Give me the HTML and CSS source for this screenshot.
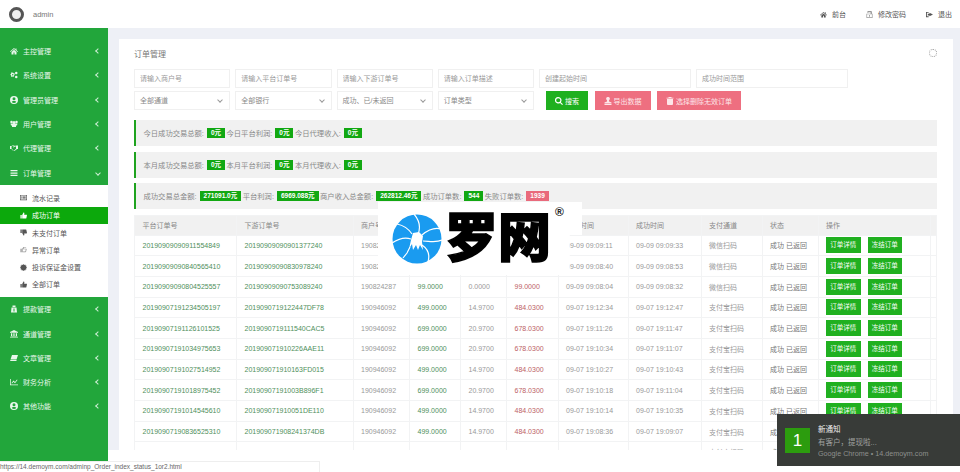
FILE: index.html
```html
<!DOCTYPE html>
<html lang="en">
<head>
<meta charset="UTF-8">
<meta name="viewport" content="width=device-width, initial-scale=1.0">
<title>订单管理</title>
<link rel="stylesheet" href="styles.css">
</head>
<body>
    <svg class="sprite" width="0" height="0">
        <symbol id="i-home" viewBox="0 0 16 16"><path d="M8 2 0 9l1 1 7-6 7 6 1-1-3-2.600V3h-2v2zM3 10v5h4v-4h2v4h4v-5L8 5.500z"/></symbol>
        <symbol id="i-cogs" viewBox="0 0 16 16"><path d="M6 3 7 4.500 9 4.500 9.500 7 8 8 8.500 10 7 11.500 5 11 3.500 12 2 10.500 2.500 9 1 8V6l1.500-.5L2 4 3.500 2.500 5 3.500zM5.500 6A1.500 1.500 0 1 0 5.500 9 1.500 1.500 0 0 0 5.500 6z"/><circle cx="12.500" cy="4" r="2.500"/><circle cx="12.500" cy="12" r="2.500"/></symbol>
        <symbol id="i-user" viewBox="0 0 16 16"><path d="M8 0a8 8 0 1 0 0 16A8 8 0 0 0 8 0zm0 2.500a3 3 0 1 1 0 6 3 3 0 0 1 0-6zM8 14a6 6 0 0 1-4.500-2c.5-1.500 2-2 4.500-2s4 .5 4.500 2A6 6 0 0 1 8 14z"/></symbol>
        <symbol id="i-users" viewBox="0 0 16 16"><circle cx="3" cy="4" r="2.500"/><circle cx="13" cy="4" r="2.500"/><circle cx="8" cy="5" r="3"/><path d="M1 7h14l-1 4h-2v3H4v-3H2z"/></symbol>
        <symbol id="i-shake" viewBox="0 0 16 16"><path d="M0 4h3l2-1h3l2 1 2-1h4v7h-2l-5 4-2-1-2-.5L3 10H0zm5 0L3 5v4l3 3 2 1 4-3.500V5L10 5 7 7 6 6l2-2z"/></symbol>
        <symbol id="i-bars" viewBox="0 0 16 16"><path d="M1 2h14v2.500H1zM1 6.800h14v2.500H1zM1 11.500h14V14H1z"/></symbol>
        <symbol id="i-list" viewBox="0 0 16 16"><path d="M0 2h16v12H0zm1.500 1.500v9h13v-9zM3 5h2v1.500H3zm3 0h7v1.500H6zM3 7.500h2V9H3zm3 0h7V9H6zM3 10h2v1.500H3zm3 0h7v1.500H6z"/></symbol>
        <symbol id="i-up" viewBox="0 0 16 16"><path d="M1 7h3v8H1zM5 7l3-6c1.500 0 2 1 2 2L9.500 6H15c1 0 1 1 .8 2l-1.300 6c-.2.700-.5 1-1.500 1H5z"/></symbol>
        <symbol id="i-down" viewBox="0 0 16 16"><path d="M1 1h3v8H1zM5 9l3 6c1.500 0 2-1 2-2l-.5-3H15c1 0 1-1 .8-2L14.500 2c-.2-.7-.5-1-1.500-1H5z"/></symbol>
        <symbol id="i-hand" viewBox="0 0 16 16"><path d="M1 6h3v8H1zM5 6l3-4h6v1.500H9.500L8 6h6.500c1 0 1 3 0 3v2c0 1-1 3-2 3H5zM6.500 7.500V12.500h5.500l1-3.500V7.500z" fill-rule="evenodd"/></symbol>
        <symbol id="i-cert" viewBox="0 0 16 16"><path d="m8 0 1.500 2L12 1l.5 2.500L15 4l-1 2.500L16 8l-2 1.500 1 2.500-2.500.5L12 15l-2.500-1L8 16l-1.500-2L4 15l-.5-2.500L1 12l1-2.500L0 8l2-1.500L1 4l2.500-.5L4 1l2.500 1z"/></symbol>
        <symbol id="i-money" viewBox="0 0 16 16"><path d="M5 1h6v3H5zM3 5h10l1 10H2zm4 2v6h2V7z" fill-rule="evenodd"/></symbol>
        <symbol id="i-bank" viewBox="0 0 16 16"><path d="M8 0 16 4v1.500H0V4zM2 6.500h2.500V12H2zm4.700 0h2.500V12H6.700zm4.800 0H14V12h-2.500zM1 13h14v1.200H1zM0 14.800h16V16H0z"/></symbol>
        <symbol id="i-book" viewBox="0 0 16 16"><path d="M4 2h12l-3 9H1zM1 12h12v2H0z"/></symbol>
        <symbol id="i-chart" viewBox="0 0 16 16"><path d="M0 2h1.500v11H16v1.500H0zM3 10l4-5 3 3 4-5 1 1-5 6.500L7 7.500 4 11z"/></symbol>
        <symbol id="i-lock" viewBox="0 0 16 16"><path d="M5 0h6c1.500 0 2.500 1 2.500 2.500V6H15v10H1V6h9.500V3H5.500v1H3V2.500C3 1 4 0 5 0zM2.500 7.500v7h11v-7zM7 9h2v4H7z" fill-rule="evenodd"/></symbol>
        <symbol id="i-exit" viewBox="0 0 16 16"><path d="M0 2h6v2H2v8h4v2H0zM8 4l8 4-8 4V10H4V6h4z"/></symbol>
        <symbol id="i-search" viewBox="0 0 16 16"><path d="M6.500 0a6.500 6.500 0 0 1 5.200 10.400l4.300 4.200-1.800 1.400-4.100-4.200A6.500 6.500 0 1 1 6.500 0zm0 2.300a4.200 4.200 0 1 0 0 8.400 4.200 4.200 0 0 0 0-8.400z"/></symbol>
        <symbol id="i-export" viewBox="0 0 16 16"><path d="M8 0a3.500 3.500 0 0 1 2 6.500V9l5 2v2H1v-2l5-2V6.500A3.500 3.500 0 0 1 8 0zM1 14h14v2H1z"/></symbol>
        <symbol id="i-trash" viewBox="0 0 16 16"><path d="M5 0h6v1.500h4V3H1V1.500h4zM2 4h12v10c0 1-1 2-2 2H4c-1 0-2-1-2-2z"/></symbol>
    </svg>

    <header class="topbar">
        <div class="admin">
            <span class="avatar"></span>
            <span>admin</span>
        </div>
        <nav class="toplinks">
            <a class="toplink"><svg class="icon"><use href="#i-home"/></svg>前台</a>
            <a class="toplink"><svg class="icon icon-light"><use href="#i-lock"/></svg>修改密码</a>
            <a class="toplink"><svg class="icon"><use href="#i-exit"/></svg>退出</a>
        </nav>
    </header>

    <div class="main">
        <aside class="sidebar">
            <ul class="menu menu-first">
                <li><svg class="icon"><use href="#i-home"/></svg><span>主控管理</span><i class="arrow"></i></li>
                <li><svg class="icon"><use href="#i-cogs"/></svg><span>系统设置</span><i class="arrow"></i></li>
                <li><svg class="icon"><use href="#i-user"/></svg><span>管理员管理</span><i class="arrow"></i></li>
                <li><svg class="icon"><use href="#i-users"/></svg><span>用户管理</span><i class="arrow"></i></li>
                <li><svg class="icon"><use href="#i-shake"/></svg><span>代理管理</span><i class="arrow"></i></li>
                <li><svg class="icon"><use href="#i-bars"/></svg><span>订单管理</span><i class="arrow arrow-down"></i></li>
            </ul>
            <ul class="submenu">
                <li><svg class="icon"><use href="#i-list"/></svg>流水记录</li>
                <li class="active"><svg class="icon"><use href="#i-up"/></svg>成功订单</li>
                <li><svg class="icon"><use href="#i-down"/></svg>未支付订单</li>
                <li><svg class="icon icon-light"><use href="#i-hand"/></svg>异常订单</li>
                <li><svg class="icon"><use href="#i-cert"/></svg>投诉保证金设置</li>
                <li><svg class="icon"><use href="#i-up"/></svg>全部订单</li>
            </ul>
            <ul class="menu">
                <li><svg class="icon"><use href="#i-money"/></svg><span>提款管理</span><i class="arrow"></i></li>
                <li><svg class="icon"><use href="#i-bank"/></svg><span>通道管理</span><i class="arrow"></i></li>
                <li><svg class="icon"><use href="#i-book"/></svg><span>文章管理</span><i class="arrow"></i></li>
                <li><svg class="icon"><use href="#i-chart"/></svg><span>财务分析</span><i class="arrow"></i></li>
                <li><svg class="icon"><use href="#i-user"/></svg><span>其他功能</span><i class="arrow"></i></li>
            </ul>
        </aside>

        <section class="content">
            <div class="card">
                <div class="card-title">
                    <h1>订单管理</h1>
                    <span class="refresh"></span>
                </div>

                <form class="filters">
                    <div class="filter-row">
                        <input class="w96" type="text" placeholder="请输入商户号">
                        <input class="w96" type="text" placeholder="请输入平台订单号">
                        <input class="w96" type="text" placeholder="请输入下游订单号">
                        <input class="w96" type="text" placeholder="请输入订单描述">
                        <input class="w152" type="text" placeholder="创建起始时间">
                        <input class="w152" type="text" placeholder="成功时间范围">
                    </div>
                    <div class="filter-row">
                        <div class="select w96">全部通道</div>
                        <div class="select w96">全部银行</div>
                        <div class="select w96">成功、已/未返回</div>
                        <div class="select w96">订单类型</div>
                        <div class="buttons">
                            <button class="btn btn-green" type="button"><svg class="icon"><use href="#i-search"/></svg>搜索</button>
                            <button class="btn btn-pink" type="button"><svg class="icon"><use href="#i-export"/></svg>导出数据</button>
                            <button class="btn btn-pink" type="button"><svg class="icon"><use href="#i-trash"/></svg>选择删除无效订单</button>
                        </div>
                    </div>
                </form>

                <div class="stat">今日成功交易总额:<b>0元</b>今日平台利润:<b>0元</b>今日代理收入:<b>0元</b></div>
                <div class="stat">本月成功交易总额:<b>0元</b>本月平台利润:<b>0元</b>本月代理收入:<b>0元</b></div>
                <div class="stat">成功交易总金额:<b>271091.0元</b>平台利润:<b>6969.088元</b>商户收入总金额:<b>262812.46元</b>成功订单数:<b>544</b>失败订单数:<b class="bad">1939</b></div>

                <table class="orders">
                    <colgroup>
                        <col class="c1"><col class="c2"><col class="c3"><col class="c4"><col class="c5"><col class="c6">
                        <col class="c7"><col class="c8"><col class="c9"><col class="c10"><col class="c11"><col class="c12">
                    </colgroup>
                    <thead>
                        <tr><th>平台订单号</th><th>下游订单号</th><th>商户号</th><th>交易金额</th><th>手续费</th><th>实际金额</th><th>创建时间</th><th>成功时间</th><th>支付通道</th><th>状态</th><th>操作</th><th></th></tr>
                    </thead>
                    <tbody>
                        <tr><td class="ok">20190909090911554849</td><td class="ok">20190909090901377240</td><td>190824287</td><td class="ok">99.0000</td><td>0.0000</td><td class="no">99.0000</td><td>09-09 09:09:11</td><td>09-09 09:09:33</td><td>微信扫码</td><td class="state">成功 已返回</td><td class="ops"><a>订单详情</a><a>冻结订单</a></td><td></td></tr>
                        <tr><td class="ok">20190909090840565410</td><td class="ok">20190909090830978240</td><td>190824287</td><td class="ok">99.0000</td><td>0.0000</td><td class="no">99.0000</td><td>09-09 09:08:40</td><td>09-09 09:08:53</td><td>微信扫码</td><td class="state">成功 已返回</td><td class="ops"><a>订单详情</a><a>冻结订单</a></td><td></td></tr>
                        <tr><td class="ok">20190909090804525557</td><td class="ok">20190909090753089240</td><td>190824287</td><td class="ok">99.0000</td><td>0.0000</td><td class="no">99.0000</td><td>09-09 09:08:04</td><td>09-09 09:08:32</td><td>微信扫码</td><td class="state">成功 已返回</td><td class="ops"><a>订单详情</a><a>冻结订单</a></td><td></td></tr>
                        <tr><td class="ok">20190907191234505197</td><td class="ok">2019090719122447DF78</td><td>190946092</td><td class="ok">499.0000</td><td>14.9700</td><td class="no">484.0300</td><td>09-07 19:12:34</td><td>09-07 19:12:47</td><td>支付宝扫码</td><td class="state">成功 已返回</td><td class="ops"><a>订单详情</a><a>冻结订单</a></td><td></td></tr>
                        <tr><td class="ok">20190907191126101525</td><td class="ok">2019090719111540CAC5</td><td>190946092</td><td class="ok">699.0000</td><td>20.9700</td><td class="no">678.0300</td><td>09-07 19:11:26</td><td>09-07 19:11:47</td><td>支付宝扫码</td><td class="state">成功 已返回</td><td class="ops"><a>订单详情</a><a>冻结订单</a></td><td></td></tr>
                        <tr><td class="ok">20190907191034975653</td><td class="ok">201909071910226AAE11</td><td>190946092</td><td class="ok">699.0000</td><td>20.9700</td><td class="no">678.0300</td><td>09-07 19:10:34</td><td>09-07 19:11:07</td><td>支付宝扫码</td><td class="state">成功 已返回</td><td class="ops"><a>订单详情</a><a>冻结订单</a></td><td></td></tr>
                        <tr><td class="ok">20190907191027514952</td><td class="ok">201909071910163FD015</td><td>190946092</td><td class="ok">499.0000</td><td>14.9700</td><td class="no">484.0300</td><td>09-07 19:10:27</td><td>09-07 19:10:43</td><td>支付宝扫码</td><td class="state">成功 已返回</td><td class="ops"><a>订单详情</a><a>冻结订单</a></td><td></td></tr>
                        <tr><td class="ok">20190907191018975452</td><td class="ok">20190907191003B896F1</td><td>190946092</td><td class="ok">699.0000</td><td>20.9700</td><td class="no">678.0300</td><td>09-07 19:10:18</td><td>09-07 19:11:04</td><td>支付宝扫码</td><td class="state">成功 已返回</td><td class="ops"><a>订单详情</a><a>冻结订单</a></td><td></td></tr>
                        <tr><td class="ok">20190907191014545610</td><td class="ok">201909071910051DE110</td><td>190946092</td><td class="ok">499.0000</td><td>14.9700</td><td class="no">484.0300</td><td>09-07 19:10:14</td><td>09-07 19:10:35</td><td>支付宝扫码</td><td class="state">成功 已返回</td><td class="ops"><a>订单详情</a><a>冻结订单</a></td><td></td></tr>
                        <tr><td class="ok">20190907190836525310</td><td class="ok">201909071908241374DB</td><td>190946092</td><td class="ok">499.0000</td><td>14.9700</td><td class="no">484.0300</td><td>09-07 19:08:36</td><td>09-07 19:09:07</td><td>支付宝扫码</td><td class="state">成功 已返回</td><td class="ops"><a>订单详情</a><a>冻结订单</a></td><td></td></tr>
                        <tr><td class="ok"></td><td class="ok"></td><td></td><td></td><td></td><td></td><td></td><td></td><td>支付宝扫码</td><td class="state">成功 已返回</td><td class="ops"></td><td></td></tr>
                    </tbody>
                </table>
            </div>
        </section>
    </div>

    <!-- watermark sitting over the table -->
    <div class="watermark">
        <svg class="wm-logo" viewBox="0 0 50 50">
            <circle cx="25" cy="25" r="24.500" fill="#1a9bf0"/>
            <g fill="none" stroke="#fff" stroke-width="1.200">
                <path d="M26 20C29 13 27 6 22 0"/>
                <path d="M30 21C36 16 42 13 49 15"/>
                <path d="M31 27C37 27 44 29 50 26"/>
                <path d="M30 31C36 35 38 41 36 48"/>
                <path d="M20 20C16 14 10 11 5 10"/>
                <path d="M19 25C13 23 6 25 0 29"/>
                <path d="M18 33 15 39 11 44"/>
            </g>
            <path d="M21 19 27 18 31 22 30 28 31 36 28 31 26 36 24 31 21 36 20 30 17 35 19 26z" fill="#fff"/>
        </svg>
        <span class="wm-text">罗网</span>
        <span class="wm-reg">®</span>
    </div>

    <!-- browser chrome in the photo: link preview and desktop notification -->
    <div class="statusbar">https://14.demoym.com/adminp_Order_index_status_1or2.html</div>
    <div class="notice">
        <div class="notice-badge">1</div>
        <div class="notice-text">
            <strong>新通知</strong>
            <span>有客户，提现啦...</span>
            <small>Google Chrome • 14.demoym.com</small>
        </div>
    </div>
</body>
</html>
```

FILE: styles.css
```css
* {
    box-sizing: border-box;
}

html, body {
    height: 100%;
}

body {
    margin: 0;
    height: 472px;
    overflow: hidden;
    background-color: #fff;
    font-family: "Liberation Sans", "Noto Sans CJK SC", sans-serif;
    font-size: 7px;
    color: #676a6c;
}

ul {
    margin: 0;
    padding: 0;
    list-style: none;
}

.sprite {
    display: none;
}

.icon {
    width: 8px;
    height: 8px;
    flex: none;
    fill: currentColor;
}

.icon-light {
    opacity: 0.6;
}

/* top bar */
.topbar {
    display: flex;
    justify-content: space-between;
    align-items: center;
    height: 28px;
    padding: 0 8px 0 9px;
}

.admin {
    display: flex;
    align-items: center;
    gap: 9px;
    font-size: 7.500px;
    color: #777;
}

.avatar {
    width: 15px;
    height: 15px;
    border: 3.500px solid #555;
    border-radius: 50%;
    background-color: #eee;
}

.toplinks {
    display: flex;
    gap: 20px;
}

.toplink {
    display: flex;
    align-items: center;
    gap: 5px;
    color: #555;
}

.toplink .icon {
    width: 7px;
    height: 7px;
}

/* sidebar */
.main {
    display: flex;
    align-items: flex-start;
}

.sidebar {
    width: 108px;
    height: 433px;
    flex: none;
    background-color: #22a63b;
}

.menu-first {
    padding-top: 11px;
}

.menu li {
    display: flex;
    align-items: center;
    gap: 5px;
    height: 24.300px;
    padding: 0 8px 0 10px;
    color: #e9f7ec;
}

.menu span {
    flex: 1;
}

.arrow {
    width: 4px;
    height: 4px;
    border-left: 1px solid #cdeed4;
    border-bottom: 1px solid #cdeed4;
    transform: rotate(45deg);
}

.arrow-down {
    transform: rotate(-45deg);
}

.submenu {
    padding: 4.500px 0 4px;
    background-color: #fff;
}

.submenu li {
    display: flex;
    align-items: center;
    gap: 5px;
    height: 17.300px;
    padding-left: 20px;
    color: #555;
}

.submenu li.active {
    background-color: #0ca90c;
    color: #fff;
}

.submenu .icon {
    width: 7px;
    height: 7px;
}

/* content */
.content {
    flex: 1;
    height: 422px;
    padding: 11px 8px 0 11px;
    background-color: #eef0f6;
}

.card {
    height: 411px;
    padding: 0 16px 0 15px;
    overflow: hidden;
    background-color: #fff;
}

.card-title {
    display: flex;
    justify-content: space-between;
    align-items: center;
    height: 30px;
    padding-bottom: 2px;
}

.card-title h1 {
    margin: 0;
    font-size: 8px;
    font-weight: normal;
    color: #777;
}

.refresh {
    width: 8px;
    height: 8px;
    border: 1px dotted #999;
    border-radius: 50%;
}

/* filter form */
.filter-row {
    display: flex;
    gap: 5px;
    height: 19px;
    margin-bottom: 3px;
}

.filter-row input,
.select {
    height: 19px;
    padding: 0 5px;
    border: 1px solid #f0f0f0;
    background-color: #fff;
    font-family: inherit;
    font-size: 7px;
    color: #888;
    line-height: 17px;
}

.filter-row input::placeholder {
    color: #999;
}

.w96 {
    width: 96.250px;
}

.w152 {
    width: 152px;
}

.select {
    position: relative;
}

.select::after {
    content: "";
    position: absolute;
    top: 6px;
    right: 7px;
    width: 3px;
    height: 3px;
    border-right: 1px solid #999;
    border-bottom: 1px solid #999;
    transform: rotate(45deg);
}

.buttons {
    display: flex;
    gap: 6.500px;
    margin-left: 7px;
}

.btn {
    display: flex;
    align-items: center;
    justify-content: center;
    gap: 2px;
    height: 19px;
    padding: 0;
    border: none;
    font-family: inherit;
    font-size: 7px;
    color: #fff;
}

.btn-green {
    width: 42px;
    background-color: #1fb01f;
}

.btn-pink {
    background-color: #ee6f80;
    color: #fde6e9;
}

.btn-pink:nth-child(2) {
    width: 56px;
}

.btn-pink:nth-child(3) {
    width: 84px;
}

/* stat strips */
.stat {
    display: flex;
    align-items: center;
    height: 26px;
    margin-bottom: 5.500px;
    padding-left: 7.500px;
    border-left: 2.500px solid #1fa31f;
    background-color: #f1f1f1;
    font-size: 7.300px;
    color: #888;
}

.filters + .stat {
    margin-top: 10px;
}

.stat b {
    display: inline-block;
    height: 10px;
    margin: 0 1.500px 0 3px;
    padding: 0 4px;
    background-color: #12a812;
    color: #fff;
    font-size: 6.500px;
    line-height: 10px;
}

.stat b.bad {
    background-color: #e96a7c;
}

/* orders table */
.orders {
    width: 802px;
    margin-top: 5px;
    table-layout: fixed;
    border-collapse: collapse;
}

.c1 { width: 102px; }
.c2 { width: 116.500px; }
.c3 { width: 56.500px; }
.c4 { width: 51px; }
.c5 { width: 46px; }
.c6 { width: 51.500px; }
.c7 { width: 70px; }
.c8 { width: 73px; }
.c9 { width: 61px; }
.c10 { width: 56px; }
.c11 { width: 112px; }
.c12 { width: 6.500px; }

.orders th,
.orders td {
    height: 20.700px;
    padding: 0 0 0 7.500px;
    border: 1px solid #f2f3f4;
    font-size: 7px;
    font-weight: normal;
    text-align: left;
    white-space: nowrap;
    color: #999;
}

.orders th {
    height: 20px;
    background-color: #f1f1f1;
    color: #888;
}

.orders td.ok {
    color: #4f8f5c;
}

.orders td.no {
    color: #bd5f66;
}

.orders td.state {
    color: #777;
}

.ops a {
    display: inline-block;
    width: 34.500px;
    height: 16px;
    margin-right: 7px;
    background-color: #20b020;
    color: #fff;
    font-size: 6.500px;
    line-height: 16px;
    text-align: center;
}

/* logo stamped over the table */
.watermark {
    position: absolute;
    top: 202px;
    left: 378px;
    display: flex;
    align-items: center;
    width: 204px;
    height: 73px;
    padding-left: 14px;
    background-color: #fff;
    clip-path: polygon(0 0, 100% 0, 100% 33px, 94% 33px, 94% 100%, 0 100%);
}

.wm-logo {
    width: 50px;
    height: 50px;
    flex: none;
}

.wm-text {
    margin: -8px 0 0 3px;
    font-family: "Noto Sans CJK SC", sans-serif;
    font-size: 53px;
    font-weight: 900;
    line-height: 1;
    color: #000;
    -webkit-text-stroke: 1.500px #000;
}

.wm-reg {
    position: absolute;
    top: 3px;
    left: 177px;
    font-size: 12px;
    font-weight: bold;
    color: #222;
}

/* link preview */
.statusbar {
    position: absolute;
    top: 461px;
    left: 0;
    width: 320px;
    height: 11px;
    border-top: 1px solid #eee;
    border-right: 1px solid #eee;
    background-color: #fff;
    font-size: 6.500px;
    line-height: 10px;
    color: #666;
}

/* desktop notification */
.notice {
    position: absolute;
    top: 414px;
    left: 777px;
    display: flex;
    align-items: center;
    gap: 8px;
    width: 183px;
    height: 52px;
    padding-left: 8px;
    background-color: #383b38;
}

.notice-badge {
    width: 25px;
    height: 25px;
    background-color: #2c9c0e;
    color: #fff;
    font-size: 17px;
    line-height: 25px;
    text-align: center;
}

.notice-text {
    display: flex;
    flex-direction: column;
    gap: 2px;
    font-size: 7.500px;
    color: #a0a2a0;
}

.notice-text strong {
    font-weight: normal;
    color: #f0f0f0;
}

.notice-text small {
    font-size: 7.200px;
    color: #8d908d;
}
```
